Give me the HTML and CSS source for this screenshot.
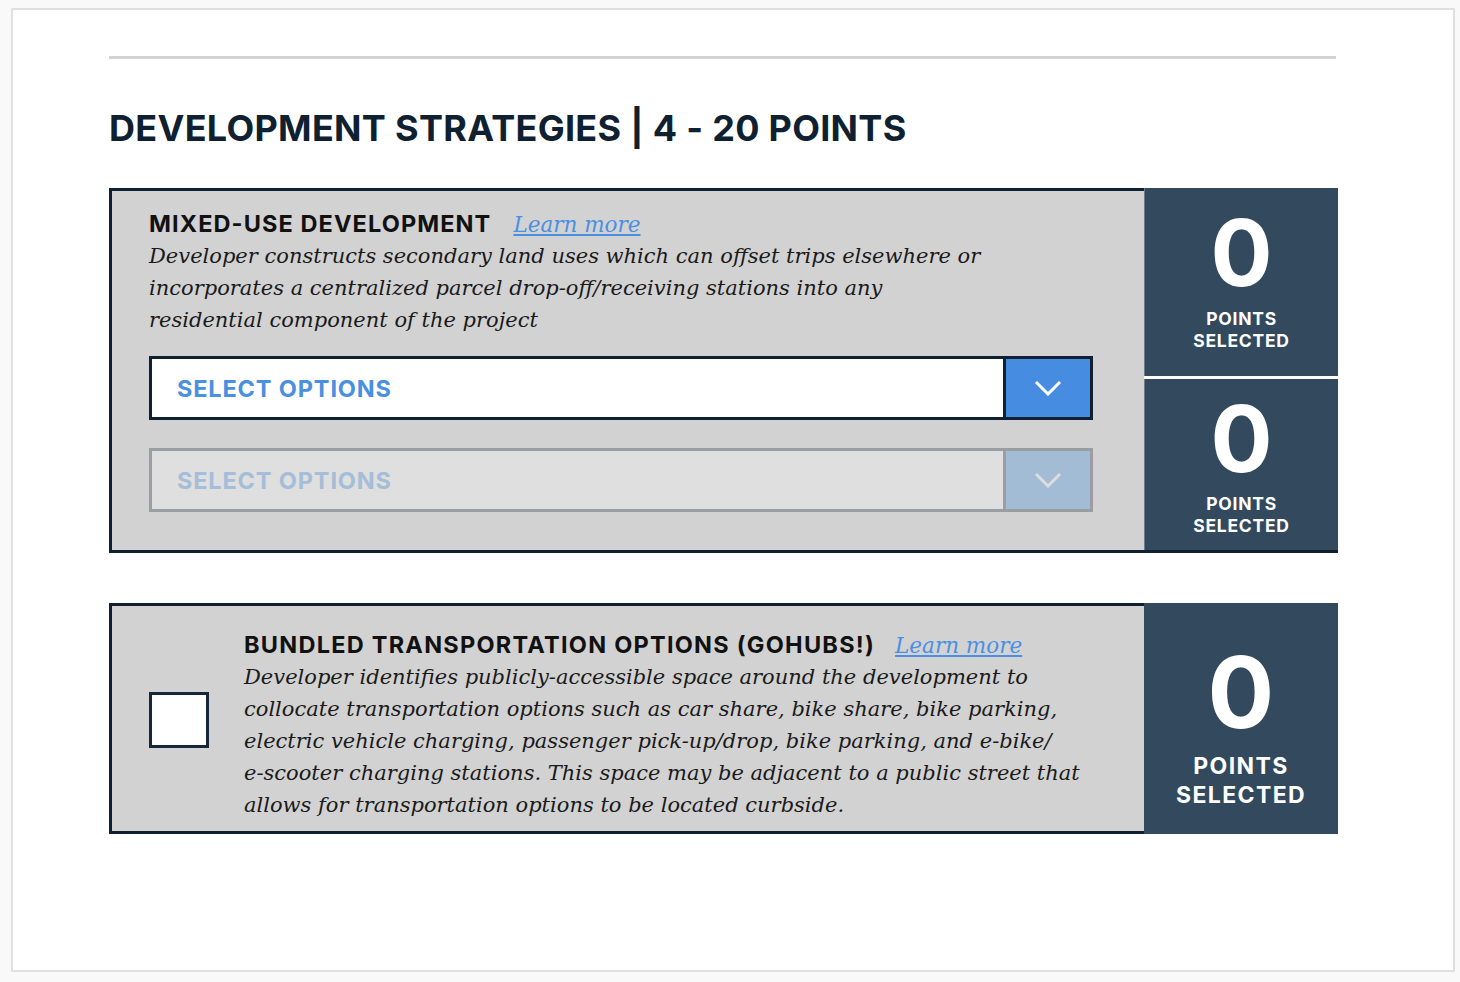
FILE: index.html
```html
<!DOCTYPE html>
<html lang="en">
<head>
<meta charset="utf-8">
<title>Development Strategies</title>
<link rel="stylesheet" href="styles.css">
</head>
<body>
<div class="page">
  <hr class="rule">
  <h2 class="heading">DEVELOPMENT STRATEGIES | 4 - 20 POINTS</h2>

  <section class="card">
    <div class="card-body">
      <div class="title-row"><span class="title">MIXED-USE DEVELOPMENT</span><a class="learn" href="#">Learn more</a></div>
      <p class="desc">Developer constructs secondary land uses which can offset trips elsewhere or incorporates a centralized parcel drop-off/receiving stations into any residential component of the project</p>
      <div class="select">
        <span class="select-label">SELECT OPTIONS</span>
        <span class="select-btn"><svg width="28" height="16" viewBox="0 0 28 16"><polyline points="2,2 14,14 26,2" fill="none" stroke-width="3"/></svg></span>
      </div>
      <div class="select disabled">
        <span class="select-label">SELECT OPTIONS</span>
        <span class="select-btn"><svg width="28" height="16" viewBox="0 0 28 16"><polyline points="2,2 14,14 26,2" fill="none" stroke-width="3"/></svg></span>
      </div>
    </div>
    <div class="points-col">
      <div class="points p1"><div class="num">0</div><div class="lbl">POINTS<br>SELECTED</div></div>
      <div class="points p2"><div class="num">0</div><div class="lbl">POINTS<br>SELECTED</div></div>
    </div>
  </section>

  <section class="card card-check">
    <div class="card-body check-body">
      <span class="checkbox"></span>
      <div class="text">
        <div class="title-row"><span class="title">BUNDLED TRANSPORTATION OPTIONS (GOHUBS!)</span><a class="learn" href="#">Learn more</a></div>
        <p class="desc">Developer identifies publicly-accessible space around the development to collocate transportation options such as car share, bike share, bike parking, electric vehicle charging, passenger pick-up/drop, bike parking, and e-bike/ e&#8209;scooter charging stations. This space may be adjacent to a public street that allows for transportation options to be located curbside.</p>
      </div>
    </div>
    <div class="points big"><div class="num">0</div><div class="lbl">POINTS<br>SELECTED</div></div>
  </section>
</div>
</body>
</html>
```
FILE: styles.css
```css
body {
  margin: 0;
  background: #f9f9f9;
  padding: 8px 5px 10px 11px;
}

.page {
  box-sizing: border-box;
  width: 1444px;
  height: 964px;
  border: 2px solid #e0e0e0;
  background: #fff;
  padding: 46px 0 0 96px;
}

.rule {
  margin: 0;
  border: 0;
  height: 3px;
  width: 1227px;
  background: #d3d3d3;
}

.heading {
  margin: 47px 0 38px;
  font: 700 36px/44px Inter, sans-serif;
  letter-spacing: 0.3px;
  color: #0f2130;
}

.card {
  display: flex;
  width: 1229px;
}

.card + .card {
  margin-top: 50px;
}

.card-body {
  box-sizing: border-box;
  flex: 0 0 1035px;
  width: 1035px;
  background: #d2d2d2;
  border: 3px solid #0f2130;
  border-right: 0;
  padding: 17px 0 38px 37px;
}

.title-row {
  display: flex;
  align-items: baseline;
  height: 32px;
  white-space: nowrap;
}

.title {
  font: 700 23.5px/32px Inter, sans-serif;
  letter-spacing: 1.1px;
  color: #111;
}

.learn {
  margin-left: 22px;
  font: italic 21.5px/32px "DejaVu Serif", serif;
  color: #4a90e2;
  text-decoration: underline;
}

.desc {
  margin: 0;
  max-width: 850px;
  font: italic 21px/32px "DejaVu Serif", serif;
  color: #1a1a1a;
}

.select {
  box-sizing: border-box;
  display: flex;
  width: 944px;
  height: 64px;
  margin-top: 20px;
  border: 3px solid #0f2130;
  background: #fff;
}

.select-label {
  flex: 1;
  display: flex;
  align-items: center;
  padding-left: 25px;
  font: 700 23.5px Inter, sans-serif;
  letter-spacing: 0.85px;
  color: #4a90e2;
}

.select-btn {
  width: 84px;
  display: flex;
  align-items: center;
  justify-content: center;
  border-left: 3px solid #0f2130;
  background: #468ce0;
}

.select-btn polyline {
  stroke: #fff;
}

.select.disabled {
  margin-top: 28px;
  border-color: #9a9ea2;
  background: #dfdfdf;
}

.select.disabled .select-label {
  color: #a4bdd8;
}

.select.disabled .select-btn {
  border-left-color: #9a9ea2;
  background: #a3bcd6;
}

.select.disabled polyline {
  stroke: #dcdcdc;
}

.points-col {
  flex: 0 0 194px;
  display: flex;
  flex-direction: column;
  gap: 3px;
  border-bottom: 3px solid #0f2130;
}

.points {
  box-sizing: border-box;
  background: #32495e;
  color: #fff;
  text-align: center;
  font-family: Inter, sans-serif;
  font-weight: 700;
}

.points .num {
  font-size: 92px;
  line-height: 1;
}

.points .lbl {
  margin-top: 9px;
  font-size: 17.5px;
  line-height: 22px;
  letter-spacing: 0.75px;
}

.p1 {
  height: 188px;
  padding-top: 19px;
  border-left: 1px solid #6d7d8c;
}

.p2 {
  flex: 1;
  padding-top: 14px;
  border-left: 1px solid #6d7d8c;
}

.p2 .lbl {
  margin-top: 8px;
}

.points.big {
  flex: 0 0 194px;
  padding-top: 40px;
}

.points.big .num {
  font-size: 99px;
}

.points.big .lbl {
  margin-top: 10px;
  font-size: 23px;
  line-height: 29px;
  letter-spacing: 1.4px;
}

.check-body {
  display: flex;
  align-items: center;
  padding: 23px 0 10px 37px;
}

.check-body .desc {
  max-width: 880px;
}

.checkbox {
  box-sizing: border-box;
  flex: 0 0 60px;
  width: 60px;
  height: 56px;
  margin-right: 35px;
  margin-bottom: 11px;
  border: 3px solid #17273a;
  background: #fff;
}

.check-body .title {
  letter-spacing: 1.25px;
}

.check-body .learn {
  margin-left: 20px;
}
```
